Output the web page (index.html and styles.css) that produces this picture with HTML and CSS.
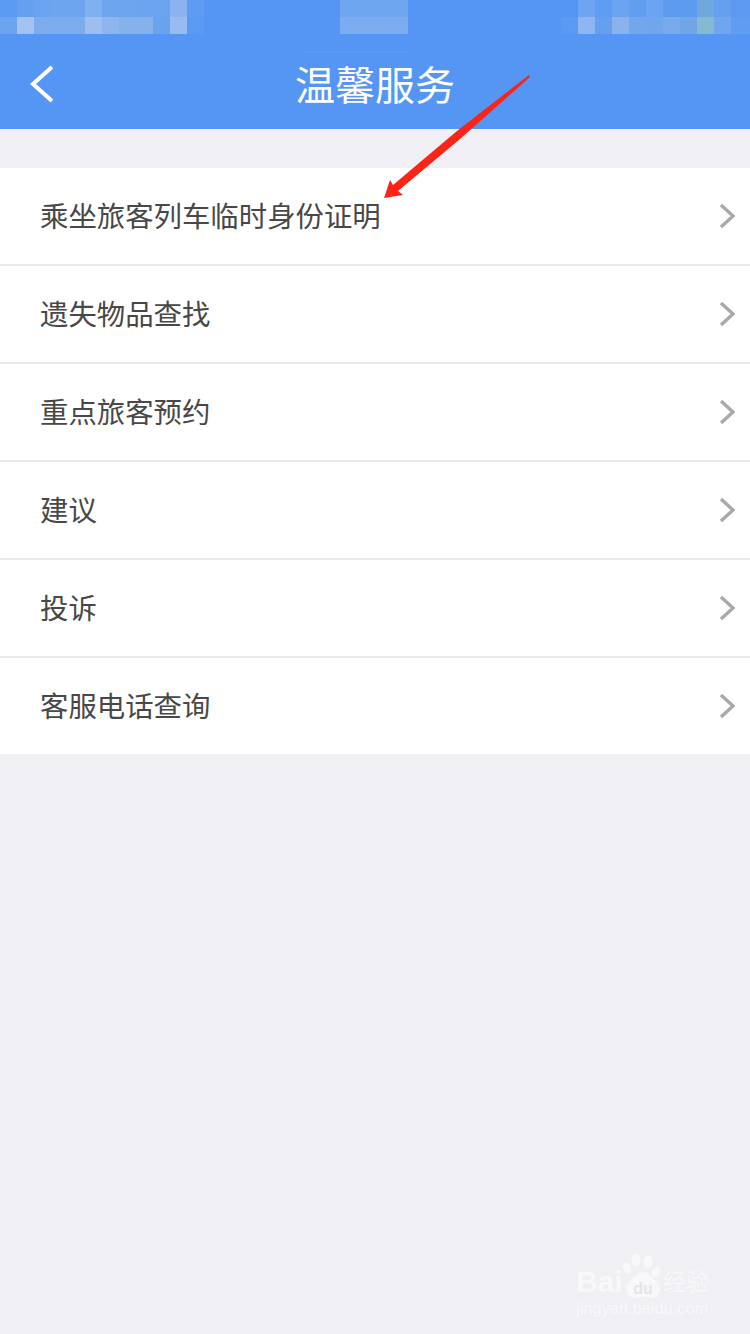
FILE: index.html
```html
<!DOCTYPE html>
<html lang="zh-CN">
<head>
    <meta charset="utf-8"/>
    <meta name="viewport" content="width=device-width, initial-scale=1.0"/>
    <title>温馨服务</title>
    <link rel="stylesheet" href="styles.css">
</head>
<body>
<div class="page">
    <header class="header">
        <!-- 打码的状态栏 -->
        <svg class="status-mosaic" width="750" height="54" viewBox="0 0 750 54" shape-rendering="crispEdges">
            <rect x="0" y="0" width="17" height="17" fill="#5a9af3"/>
            <rect x="17" y="0" width="17" height="17" fill="#659ff0"/>
            <rect x="34" y="0" width="17" height="17" fill="#6aa3f0"/>
            <rect x="51" y="0" width="34" height="17" fill="#6ea5ef"/>
            <rect x="85" y="0" width="17" height="17" fill="#7fb0ef"/>
            <rect x="102" y="0" width="34" height="17" fill="#6ea5ef"/>
            <rect x="136" y="0" width="34" height="17" fill="#6ca4f0"/>
            <rect x="170" y="0" width="17" height="17" fill="#8ab3f0"/>
            <rect x="187" y="0" width="17" height="17" fill="#5e9cf3"/>
            <rect x="0" y="17" width="17" height="17" fill="#6ba3ee"/>
            <rect x="17" y="17" width="17" height="17" fill="#a3c2ef"/>
            <rect x="34" y="17" width="51" height="17" fill="#7cacec"/>
            <rect x="85" y="17" width="17" height="17" fill="#9ebfee"/>
            <rect x="102" y="17" width="17" height="17" fill="#8db5ee"/>
            <rect x="119" y="17" width="34" height="17" fill="#85b2ea"/>
            <rect x="153" y="17" width="17" height="17" fill="#6aa2ee"/>
            <rect x="170" y="17" width="17" height="17" fill="#98bcf0"/>
            <rect x="187" y="17" width="17" height="17" fill="#5a9af3"/>
            <rect x="340" y="0" width="68" height="17" fill="#6fa6f0"/>
            <rect x="340" y="17" width="68" height="17" fill="#7cabef"/>
            <rect x="578" y="0" width="17" height="17" fill="#6ea5f0"/>
            <rect x="595" y="0" width="17" height="17" fill="#5f9df2"/>
            <rect x="612" y="0" width="17" height="17" fill="#6aa3f0"/>
            <rect x="629" y="0" width="17" height="17" fill="#619ef1"/>
            <rect x="646" y="0" width="17" height="17" fill="#6ba4f3"/>
            <rect x="663" y="0" width="17" height="17" fill="#5d9bf0"/>
            <rect x="680" y="0" width="17" height="17" fill="#5b9cee"/>
            <rect x="697" y="0" width="17" height="17" fill="#6ea8dc"/>
            <rect x="714" y="0" width="17" height="17" fill="#659ff0"/>
            <rect x="731" y="0" width="19" height="17" fill="#5b9af0"/>
            <rect x="561" y="17" width="17" height="17" fill="#5a9af3"/>
            <rect x="578" y="17" width="17" height="17" fill="#8eb6f1"/>
            <rect x="595" y="17" width="17" height="17" fill="#659ff0"/>
            <rect x="612" y="17" width="17" height="17" fill="#8ab3ec"/>
            <rect x="629" y="17" width="17" height="17" fill="#73a7ec"/>
            <rect x="646" y="17" width="17" height="17" fill="#6fa6ec"/>
            <rect x="663" y="17" width="17" height="17" fill="#78aaec"/>
            <rect x="680" y="17" width="17" height="17" fill="#70a6e5"/>
            <rect x="697" y="17" width="17" height="17" fill="#86bad0"/>
            <rect x="714" y="17" width="17" height="17" fill="#70a6f0"/>
            <rect x="731" y="17" width="19" height="17" fill="#5f9df1"/>
            <rect x="306" y="51" width="102" height="2" fill="#5b9af4"/>
        </svg>
        <div class="nav">
            <svg class="nav-back" width="26" height="38" viewBox="0 0 26 38">
                <polyline points="23,2 4,19 23,36" fill="none" stroke="#fff" stroke-width="4"/>
            </svg>
            <h1 class="nav-title">温馨服务</h1>
        </div>
    </header>

    <ul class="menu">
        <li class="menu-item">
            <span class="menu-text">乘坐旅客列车临时身份证明</span>
            <svg class="menu-arrow" width="16" height="26" viewBox="0 0 16 26"><polyline points="2,2 14,13 2,24"/></svg>
        </li>
        <li class="menu-item">
            <span class="menu-text">遗失物品查找</span>
            <svg class="menu-arrow" width="16" height="26" viewBox="0 0 16 26"><polyline points="2,2 14,13 2,24"/></svg>
        </li>
        <li class="menu-item">
            <span class="menu-text">重点旅客预约</span>
            <svg class="menu-arrow" width="16" height="26" viewBox="0 0 16 26"><polyline points="2,2 14,13 2,24"/></svg>
        </li>
        <li class="menu-item">
            <span class="menu-text">建议</span>
            <svg class="menu-arrow" width="16" height="26" viewBox="0 0 16 26"><polyline points="2,2 14,13 2,24"/></svg>
        </li>
        <li class="menu-item">
            <span class="menu-text">投诉</span>
            <svg class="menu-arrow" width="16" height="26" viewBox="0 0 16 26"><polyline points="2,2 14,13 2,24"/></svg>
        </li>
        <li class="menu-item">
            <span class="menu-text">客服电话查询</span>
            <svg class="menu-arrow" width="16" height="26" viewBox="0 0 16 26"><polyline points="2,2 14,13 2,24"/></svg>
        </li>
    </ul>

    <!-- 红色标注箭头 -->
    <svg class="red-arrow" width="160" height="135" viewBox="380 70 160 135">
        <polygon points="529,75 530,77 460,139 398,191 403,195 384,198 390,180 393,185 457,131" fill="#fb2418"/>
    </svg>

    <div class="watermark">
        <div class="watermark-top">
            <span class="wm-bai">Bai</span>
            <svg class="wm-paw" width="40" height="48" viewBox="0 0 40 48">
                <ellipse cx="5" cy="16" rx="4" ry="5.5" transform="rotate(-20 5 16)"/>
                <ellipse cx="14" cy="8" rx="4.5" ry="6.5"/>
                <ellipse cx="26" cy="10" rx="4.5" ry="6.5" transform="rotate(10 26 10)"/>
                <ellipse cx="34" cy="20" rx="4" ry="5.5" transform="rotate(25 34 20)"/>
                <path d="M21 20 C27 20 29 25 34 29 C41 34 38 46 29 46 C25 45 17 45 13 46 C4 46 1 35 8 29 C13 25 15 20 21 20 Z"/>
                <text x="21" y="42" text-anchor="middle" class="wm-du">du</text>
            </svg>
            <span class="wm-jy">经验</span>
        </div>
        <div class="wm-url">jingyan.baidu.com</div>
    </div>
</div>
</body>
</html>
```

FILE: styles.css
```css
html, body {
    margin: 0;
    padding: 0;
}

body {
    font-family: "Liberation Sans", "Noto Sans CJK SC", sans-serif;
    background-color: #efeff4;
}

.page {
    position: relative;
    width: 750px;
    height: 1334px;
    overflow: hidden;
    background-color: #efeff4;
}

.header {
    height: 129px;
    background-color: #5596f4;
}

.status-mosaic {
    display: block;
}

.nav {
    position: relative;
    height: 60px;
    display: flex;
    align-items: center;
    justify-content: center;
}

.nav-back {
    position: absolute;
    left: 29px;
    top: 11px;
}

.nav-title {
    margin: 0;
    padding-top: 3px;
    font-size: 40px;
    font-weight: 400;
    line-height: 60px;
    color: #fff;
}

.menu {
    list-style: none;
    margin: 39px 0 0;
    padding: 0;
    background-color: #fff;
}

.menu-item {
    height: 96px;
    display: flex;
    align-items: center;
    justify-content: space-between;
    padding: 0 15px 0 40px;
    border-bottom: 2px solid #e9e9eb;
}

.menu-item:last-child {
    border-bottom: none;
}

.menu-text {
    font-size: 28.4px;
    color: #484848;
    padding-bottom: 3px;
}

.menu-arrow polyline {
    fill: none;
    stroke: #a9a9a9;
    stroke-width: 3.4;
}

.red-arrow {
    position: absolute;
    left: 380px;
    top: 70px;
}

.watermark {
    position: absolute;
    left: 576px;
    top: 1252px;
    width: 134px;
    color: #f8f8fb;
}

.watermark-top {
    display: flex;
    align-items: flex-end;
    height: 48px;
}

.wm-bai {
    flex: none;
    width: 46px;
    font-size: 30px;
    font-weight: 700;
    line-height: 36px;
}

.wm-paw {
    flex: none;
    fill: #f8f8fb;
}

.wm-du {
    font-size: 16px;
    font-weight: 700;
    fill: #e4e4ea;
}

.wm-jy {
    font-size: 23px;
    line-height: 36px;
    margin-left: 1px;
    white-space: nowrap;
}

.wm-url {
    font-size: 16px;
    letter-spacing: 0.2px;
    line-height: 18px;
    white-space: nowrap;
}
```
